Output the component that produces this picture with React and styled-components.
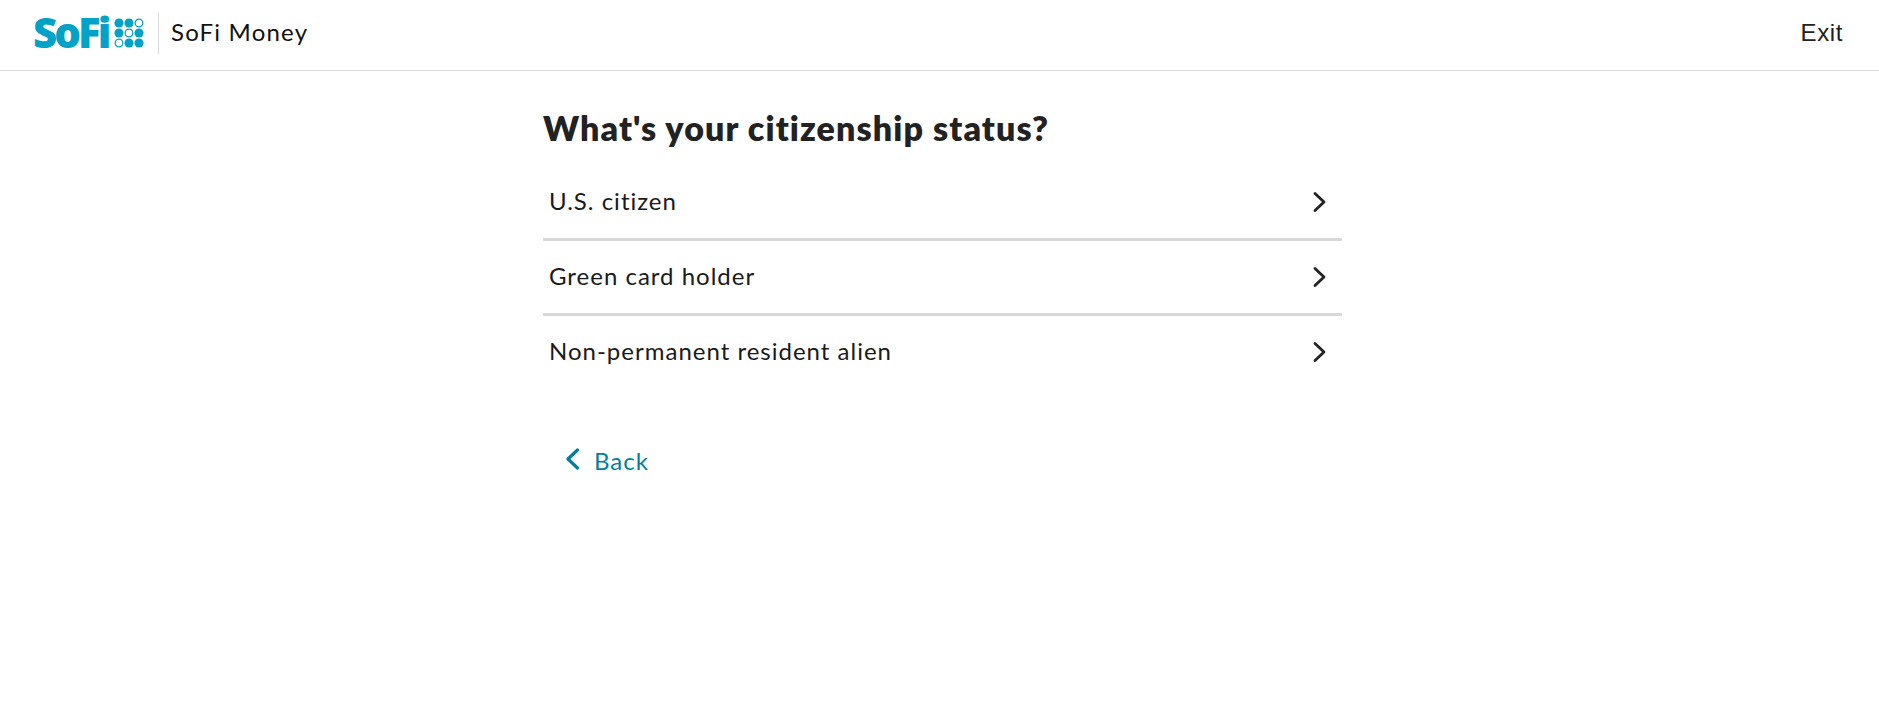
import React from "react";
import styled, { createGlobalStyle } from "styled-components";

const Global = createGlobalStyle`
  html, body { margin: 0; padding: 0; background: #fff; }
  body { font-family: "Lato", "Noto Sans", sans-serif; color: #1a1a1a; }
`;
const Page = styled.div`min-height: 707px; display: flex; flex-direction: column;`;
const Header = styled.header`
  height: 71px; box-sizing: border-box; border-bottom: 1px solid #dcdcdc;
  display: flex; align-items: center; justify-content: space-between;
  padding: 0 36px 4px 33px;
`;
const Brand = styled.div`display: flex; align-items: center;`;
const LogoWord = styled.span`
  width: 71px; margin-bottom: 3px; white-space: nowrap;
  font-family: "Open Sans", sans-serif; font-weight: 800; font-size: 42px; line-height: 1;
  letter-spacing: -3px; color: #00a2c7;
`;
const Dots = styled.svg`margin-left: 10px; width: 30px; height: 30px; display: block;`;
const Divider = styled.div`width: 1px; height: 42px; background: #dcdcdc; margin: 0 12px 0 14px;`;
const Product = styled.span`margin-bottom: 3px; font-size: 24px; letter-spacing: 1.2px; color: #111;`;
const Exit = styled.span`font-family: "Liberation Sans", sans-serif; font-size: 24px; color: #222; letter-spacing: .6px;`;
const Main = styled.main`width: 799px; margin-left: 543px; padding-top: 37px;`;
const Title = styled.h1`
  margin: 0; font-size: 34px; line-height: 40px; font-weight: 800; letter-spacing: 1.1px; color: #222;
`;
const List = styled.div`margin-top: 18px;`;
const Row = styled.div`
  height: 75px; box-sizing: border-box; display: flex; align-items: center; justify-content: space-between;
  padding: 0 13px 3px 6px; font-size: 24px; letter-spacing: 1px; color: #1a1a1a;
  border-bottom: 3px solid ${(p) => (p.$last ? "transparent" : "#d8d8d8")};
`;
const BackLink = styled.div`
  margin-top: 55px; margin-left: 20px; display: flex; align-items: center; gap: 13px;
  font-size: 24px; letter-spacing: 1px; color: #007f9f;
`;
const ChevronIcon = styled.svg`
  display: block; width: 18px; height: 22px; fill: none; stroke: ${(p) => p.$color};
  stroke-width: ${(p) => p.$weight}; stroke-linecap: round; stroke-linejoin: round;
  margin-top: ${(p) => p.$top}px; margin-bottom: ${(p) => p.$bottom}px;
`;

const Chevron = ({ dir = "right", color = "#222" }) => (
  <ChevronIcon
    viewBox="0 0 18 22"
    $color={color}
    $weight={dir === "right" ? 2.8 : 3.2}
    $top={dir === "right" ? 3 : 0}
    $bottom={dir === "right" ? 0 : 3}
  >
    <path d={dir === "right" ? "M4 2.5 L13 11 L4 19.5" : "M14.5 2 L5 11 L14.5 20"} />
  </ChevronIcon>
);

const pattern = [[1,1,0],[1,0,1],[0,1,1]];
const LogoDots = () => (
  <Dots viewBox="0 0 33 33">
    {pattern.map((r, y) => r.map((on, x) => (
      <circle key={`${x}-${y}`} cx={5.5 + x * 11} cy={5.5 + y * 11} r={on ? 5 : 4.2}
        fill={on ? "#00a2c7" : "none"} stroke={on ? "none" : "#00a2c7"} strokeWidth="1.4" />
    )))}
  </Dots>
);

const options = ["U.S. citizen", "Green card holder", "Non-permanent resident alien"];

export default function App() {
  return (
    <Page>
      <Global />
      <Header>
        <Brand>
          <LogoWord>SoFi</LogoWord>
          <LogoDots />
          <Divider />
          <Product>SoFi Money</Product>
        </Brand>
        <Exit>Exit</Exit>
      </Header>
      <Main>
        <Title>What's your citizenship status?</Title>
        <List>
          {options.map((o, i) => (
            <Row key={o} $last={i === options.length - 1}>
              <span>{o}</span>
              <Chevron />
            </Row>
          ))}
        </List>
        <BackLink>
          <Chevron dir="left" color="#007f9f" />
          <span>Back</span>
        </BackLink>
      </Main>
    </Page>
  );
}
